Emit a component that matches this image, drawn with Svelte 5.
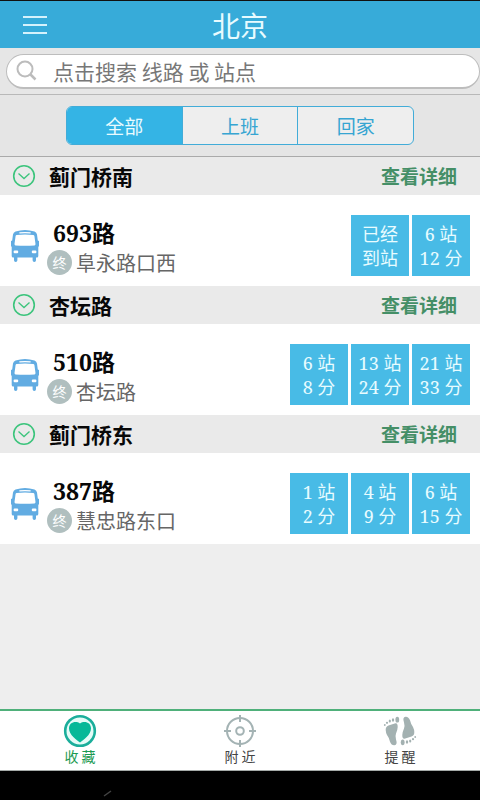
<script>
  let tab = $state(0);
  let nav = $state(0);
  const tabs = ['全部', '上班', '回家'];
  const stations = [
    { name: '蓟门桥南', line: '693', end: '阜永路口西', times: [['已经', '到站'], ['6 站', '12 分']] },
    { name: '杏坛路', line: '510', end: '杏坛路', times: [['6 站', '8 分'], ['13 站', '24 分'], ['21 站', '33 分']] },
    { name: '蓟门桥东', line: '387', end: '慧忠路东口', times: [['1 站', '2 分'], ['4 站', '9 分'], ['6 站', '15 分']] }
  ];
  const navs = ['收 藏', '附 近', '提 醒'];
</script>

{#snippet foot()}
  <path d="M2.7 16Q2.500 12.500 5.500 11.500L12.500 9.200Q14.800 9 14.700 13Q14.600 16 13 19.500Q12 22 13 25.500Q14.800 30.800 11.500 31.200Q8.500 31.500 7 27.700Q6 23.500 4 21Q2.800 18.500 2.700 16Z" />
  <ellipse cx="14.300" cy="5.700" rx="1.900" ry="2.900" />
  <ellipse cx="10" cy="6" rx="1.200" ry="1.800" />
  <ellipse cx="6.800" cy="7" rx="1.100" ry="1.500" />
  <circle cx="4" cy="8.800" r="1.100" />
  <circle cx="1.800" cy="11" r=".9" />
{/snippet}

<div class="app">
  <header>
    <button class="menu" aria-label="菜单">
      <svg width="24" height="20" viewBox="0 0 24 20" fill="none" stroke="#d5f2fc" stroke-width="2"><path d="M0 2h24M0 10h24M0 18h24" /></svg>
    </button>
    <h1>北京</h1>
  </header>

  <div class="search">
    <label class="field">
      <svg width="22" height="22" viewBox="0 0 22 22" fill="none" stroke="#bcbcbc" stroke-width="2"><circle cx="9" cy="9" r="7.500" /><path d="M14.500 14.500l5 5" stroke-width="2.500" /></svg>
      <input type="text" aria-label="搜索" placeholder="点击搜索 线路 或 站点" />
    </label>
  </div>

  <div class="filter">
    <div class="segments">
      {#each tabs as t, i}
        <button class:on={tab === i} aria-pressed={tab === i} onclick={() => (tab = i)}>{t}</button>
      {/each}
    </div>
  </div>

  <main>
    {#each stations as s}
      <section>
        <div class="station">
          <svg width="24" height="24" viewBox="0 0 24 24" fill="none" stroke="#3cc47c"><circle cx="12" cy="12" r="10.300" stroke-width="1.600" /><path d="M6.500 9.500l5.500 5 5.500-5" stroke-width="1.300" /></svg>
          <h2>{s.name}</h2>
          <a href="#detail">查看详细</a>
        </div>
        <div class="route">
          <svg class="bus" width="28" height="32" viewBox="0 0 28 32">
            <path fill="#62ace2" d="M4.500 1.600Q14-1.400 23.500 1.600Q25.600 2.400 26 4.500L26.800 10.500L28 11V16L27.300 17V26Q27.300 27.500 25.800 27.500H25V30.300Q25 32 23.300 32Q21.600 32 21.600 30.300V27.500H6.400V30.300Q6.400 32 4.700 32Q3 32 3 30.300V27.500H2.200Q.7 27.500 .7 26V17L0 16V11L1.200 10.500L2 4.500Q2.400 2.400 4.500 1.600Z" />
            <path fill="#fff" d="M8.500 2.300Q14 1.500 19.500 2.300Q20 2.800 19.500 3.400Q14 2.900 8.500 3.400Q8 2.800 8.500 2.300ZM5.800 5Q14 4.200 22.200 5Q23.200 5.100 23.400 6L24.500 14Q24.500 15.300 23.500 15.400Q14 16 4.500 15.400Q3.500 15.300 3.500 14L4.600 6Q4.800 5.100 5.800 5Z" />
            <rect x="2.600" y="20.500" width="4.600" height="2.800" rx="1" fill="#fff" />
            <rect x="20.800" y="20.500" width="4.600" height="2.800" rx="1" fill="#fff" />
          </svg>
          <div class="info">
            <h3>{s.line}路</h3>
            <p><span class="end">终</span>{s.end}</p>
          </div>
          <div class="times">
            {#each s.times as [a, b]}
              <div class="time"><span>{a}</span><span>{b}</span></div>
            {/each}
          </div>
        </div>
      </section>
    {/each}
  </main>

  <nav>
    {#each navs as n, i}
      <button class:on={nav === i} onclick={() => (nav = i)}>
        <svg width="34" height="34" viewBox="0 0 34 34">
          {#if i === 0}
            <circle cx="17" cy="17" r="14.800" fill="#e4fbf7" stroke="#1bae9b" stroke-width="2.600" />
            <path fill="#06b898" d="M17 28.500C14 26 6 21 6 14.500C6 8 13 6.500 17 9.500C21 6.500 28 8 28 14.500C28 21 20 26 17 28.500Z" />
          {:else if i === 1}
            <g fill="none" stroke="#a4b3b4" stroke-width="2"><circle cx="17" cy="17" r="13" /><circle cx="17" cy="17" r="3.800" /><path d="M17 1v7M17 26v7M1 17h7M26 17h7" /></g>
          {:else}
            <g fill="#a3b1b1">
              {@render foot()}
              <g transform="rotate(180 17 17)">{@render foot()}</g>
            </g>
          {/if}
        </svg>
        <span>{n}</span>
      </button>
    {/each}
  </nav>
  <div class="system">
    <svg width="12" height="8" viewBox="0 0 12 8"><path d="M2 7L9 2" stroke="#444" stroke-width="1.500" /></svg>
  </div>
</div>

<style>
  .app {
    display: flex;
    flex-direction: column;
    min-height: 100vh;
    box-sizing: border-box;
    border-top: 1px solid #111;
    background: #eee;
    font-family: "Noto Sans CJK SC", sans-serif;
  }
  button { border: 0; padding: 0; background: none; font: inherit; cursor: pointer; }
  svg { display: block; flex: none; }
  h1, h2, h3, p { margin: 0; }
  header {
    display: grid;
    grid-template-columns: 1fr auto 1fr;
    align-items: center;
    height: 47px;
    background: #37abd9;
  }
  .menu { justify-self: start; padding: 0 23px; }
  h1 { font-size: 28px; line-height: 40px; font-weight: 400; color: #e8fbff; }
  .search { padding: 6px 0 5px 6px; background: #e6e6e6; border-bottom: 1px solid #b8b8b8; }
  .field {
    display: flex;
    align-items: center;
    gap: 15px;
    height: 35px;
    box-sizing: border-box;
    padding: 0 9px;
    border: 1px solid #bdbdbd;
    border-bottom-width: 2px;
    border-radius: 18px;
    background: #fff;
  }
  input {
    flex: 1;
    min-width: 0;
    border: 0;
    padding: 0;
    outline: 0;
    background: none;
    font-family: inherit;
    font-size: 21px;
    line-height: 30px;
  }
  input::placeholder { color: #777; opacity: 1; }
  .filter { padding: 11px 66px; background: #e5e5e5; border-bottom: 1px solid #aaa; }
  .segments {
    display: flex;
    height: 39px;
    box-sizing: border-box;
    border: 1px solid #42acd8;
    border-radius: 6px;
    overflow: hidden;
    background: #eee;
  }
  .segments button { flex: 1; font-size: 19px; line-height: 36px; color: #36a5d2; }
  .segments button + button { border-left: 1px solid #42acd8; }
  .segments .on { background: #34b4e5; color: #e8fbff; }
  main { flex: 1; }
  .station { display: flex; align-items: center; height: 38px; padding: 0 23px 0 12px; background: #eaeaea; }
  h2 { flex: 1; margin-left: 13px; font-size: 21px; line-height: 30px; font-weight: 700; color: #080808; }
  .station a { font-size: 19px; line-height: 30px; font-weight: 700; color: #458f67; text-decoration: none; }
  .route { display: flex; align-items: center; height: 91px; padding: 0 10px 0 11px; background: #fff; }
  .bus { margin-top: 10px; }
  .info { flex: 1; margin: 14px 0 0 8px; }
  h3 { padding-left: 6px; font-family: "Noto Serif", "Droid Serif", "Noto Sans CJK SC", serif; font-size: 23px; line-height: 30px; font-weight: 700; color: #080808; }
  .info p { display: flex; align-items: center; gap: 4px; font-size: 20px; line-height: 30px; color: #666; }
  .end { width: 25px; border-radius: 50%; background: #b0bfbf; color: #fff; font-size: 14px; line-height: 25px; text-align: center; }
  .times { display: flex; gap: 3px; margin-top: 10px; }
  .time {
    display: flex;
    flex-direction: column;
    justify-content: center;
    width: 58px;
    height: 61px;
    background: #48bbe6;
    color: #e8fcff;
    font-family: "Noto Serif", "Droid Serif", "Noto Sans CJK SC", serif;
    font-size: 18px;
    line-height: 24px;
    text-align: center;
  }
  nav { display: flex; height: 62px; box-sizing: border-box; border-top: 2px solid #4fb07a; border-bottom: 1px solid #a5aaa8; background: #fff; }
  nav button { flex: 1; display: flex; flex-direction: column; align-items: center; padding-top: 3px; color: #444; }
  nav span { font-size: 14px; line-height: 16px; }
  nav .on { color: #1c9a51; }
  .system { height: 29px; box-sizing: border-box; padding: 18px 102px 0; background: #000; }
</style>
